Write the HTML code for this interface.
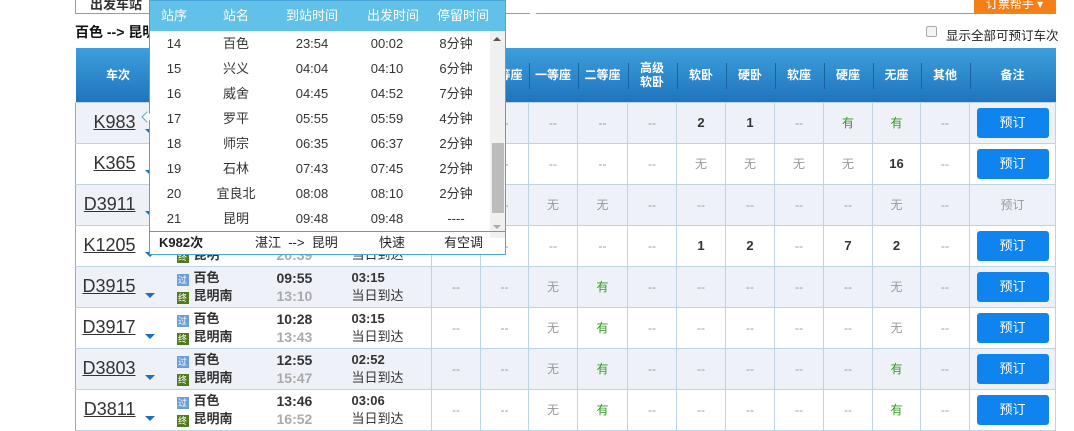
<!DOCTYPE html>
<html><head><meta charset="utf-8"><style>
*{margin:0;padding:0;box-sizing:border-box}
body{width:1074px;height:426px;overflow:hidden;background:#fff;font-family:"Liberation Sans","Noto Sans CJK SC",sans-serif;font-size:12px;color:#333;position:relative}
.abs{position:absolute}
table{border-collapse:collapse;table-layout:fixed;position:absolute;left:75px;top:48px;width:980px}
th{height:54px;color:#fff;font-weight:bold;font-size:12px;background:linear-gradient(#3d9fdc,#1f74bd);line-height:14px;position:relative}
th+th:before{content:"";position:absolute;left:0;top:15px;height:26px;border-left:1px solid #1a63a3}
th.n:before{display:none}
td{height:41px;border:1px solid #bfd4e3;text-align:center;color:#999;font-size:12px;padding:0}
td.tc,td.st,td.tm{border-right:none}
td.st,td.tm,td.du{border-left:none}
td.tc{border-left:1px solid #7fb0d8}
tr.o td{background:#eef1f8}
td.b{color:#333;font-weight:bold;font-size:13px}
td.g{color:#2e9a1e}
.btn{display:inline-block;width:72px;height:30px;line-height:30px;background:#0f84ee;color:#fff;border-radius:3px;font-size:13px}
td.tc{text-align:right;padding-right:25px;color:#333;font-size:18px;position:relative}
td.tc u{text-decoration:underline}
td.tc i{position:absolute;left:69px;top:26px;width:0;height:0;border-left:5px solid transparent;border-right:5px solid transparent;border-top:5px solid #1a6fc4}
td.st{text-align:left;padding-left:16px;color:#333;font-weight:bold;font-size:13px;line-height:18px}
.ic{display:inline-block;width:12px;height:12px;vertical-align:-1px;margin-right:5px;font-size:9px;color:#fff;line-height:12px;text-align:center;font-weight:normal}
.ig{background:#6a9ed8}.iz{background:#4f7a1d}
td.tm{text-align:left;padding-left:6px;font-weight:bold;font-size:14px;line-height:18px;color:#333}
td.tm span{color:#aaa}
td.du{text-align:left;padding-left:1px;color:#333;font-size:13px;line-height:18px}
td.du b{font-size:13px}
#pop{position:absolute;left:149px;top:0;width:357px;height:255px;border:1px solid #4aa6d8;background:#fff}
#pop .h{height:30px;background:#62c1e8;color:#fff;font-size:13px;position:relative}
#pop .h span,#pop .r span{position:absolute;top:0;width:80px;margin-left:-40px;text-align:center}
#pop .h span{line-height:30px}
#pop .r{height:25px;position:relative;font-size:13px;color:#333}
#pop .r span{line-height:25px}
</style></head><body>
<div class="abs" style="left:75px;top:-2px;width:981px;height:16px;border:1px solid #6ca7d0;border-top:none"></div>
<div class="abs" style="left:90px;top:-6px;font-weight:bold;font-size:13px">出发车站</div>
<div class="abs" style="left:974px;top:0;width:81px;height:13px;background:#f57f17;color:#fff;font-size:12px;line-height:8px;text-align:center">订票帮手 ▾</div>
<div class="abs" style="left:75px;top:22px;font-weight:bold;font-size:14px;color:#111">百色 --&gt; 昆明</div>
<div class="abs" style="left:926px;top:26px;width:11px;height:11px;border:1px solid #aaa;border-radius:2px;background:#f4f4f4"></div>
<div class="abs" style="left:946px;top:25px;font-size:12.5px;color:#222">显示全部可预订车次</div>
<table>
<colgroup><col style="width:85px"><col style="width:110px"><col style="width:80px"><col style="width:81px"><col style="width:49px"><col style="width:48px"><col style="width:49px"><col style="width:50px"><col style="width:49px"><col style="width:49px"><col style="width:49px"><col style="width:49px"><col style="width:49px"><col style="width:48px"><col style="width:49px"><col style="width:86px"></colgroup>
<tr><th>车次</th><th>出发站<br>到达站</th><th>出发时间<br>到达时间</th><th>历时</th><th>商务座</th><th>特等座</th><th>一等座</th><th>二等座</th><th>高级<br>软卧</th><th>软卧</th><th>硬卧</th><th>软座</th><th>硬座</th><th>无座</th><th>其他</th><th>备注</th></tr>
<tr class="o"><td class="tc"><u>K983</u><i></i></td><td class="st"></td><td class="tm"></td><td class="du"></td><td>--</td><td>--</td><td>--</td><td>--</td><td>--</td><td class="b">2</td><td class="b">1</td><td>--</td><td class="g">有</td><td class="g">有</td><td>--</td><td><span class="btn">预订</span></td></tr>
<tr><td class="tc"><u>K365</u><i></i></td><td class="st"></td><td class="tm"></td><td class="du"></td><td>--</td><td>--</td><td>--</td><td>--</td><td>--</td><td>无</td><td>无</td><td>无</td><td>无</td><td class="b">16</td><td>--</td><td><span class="btn">预订</span></td></tr>
<tr class="o"><td class="tc"><u>D3911</u><i></i></td><td class="st"></td><td class="tm"></td><td class="du"></td><td>--</td><td>--</td><td>无</td><td>无</td><td>--</td><td>--</td><td>--</td><td>--</td><td>--</td><td>无</td><td>--</td><td style="color:#999">预订</td></tr>
<tr><td class="tc"><u>K1205</u><i></i></td><td class="st"><br><span class="ic iz">终</span>昆明</td><td class="tm"><br><span>20:39</span></td><td class="du"><br>当日到达</td><td>--</td><td>--</td><td>--</td><td>--</td><td>--</td><td class="b">1</td><td class="b">2</td><td>--</td><td class="b">7</td><td class="b">2</td><td>--</td><td><span class="btn">预订</span></td></tr>
<tr class="o"><td class="tc"><u>D3915</u><i></i></td><td class="st"><span class="ic ig">过</span>百色<br><span class="ic iz">终</span>昆明南</td><td class="tm">09:55<br><span>13:10</span></td><td class="du"><b>03:15</b><br>当日到达</td><td>--</td><td>--</td><td>无</td><td class="g">有</td><td>--</td><td>--</td><td>--</td><td>--</td><td>--</td><td>无</td><td>--</td><td><span class="btn">预订</span></td></tr>
<tr><td class="tc"><u>D3917</u><i></i></td><td class="st"><span class="ic ig">过</span>百色<br><span class="ic iz">终</span>昆明南</td><td class="tm">10:28<br><span>13:43</span></td><td class="du"><b>03:15</b><br>当日到达</td><td>--</td><td>--</td><td>无</td><td class="g">有</td><td>--</td><td>--</td><td>--</td><td>--</td><td>--</td><td>无</td><td>--</td><td><span class="btn">预订</span></td></tr>
<tr class="o"><td class="tc"><u>D3803</u><i></i></td><td class="st"><span class="ic ig">过</span>百色<br><span class="ic iz">终</span>昆明南</td><td class="tm">12:55<br><span>15:47</span></td><td class="du"><b>02:52</b><br>当日到达</td><td>--</td><td>--</td><td>无</td><td class="g">有</td><td>--</td><td>--</td><td>--</td><td>--</td><td>--</td><td class="g">有</td><td>--</td><td><span class="btn">预订</span></td></tr>
<tr><td class="tc"><u>D3811</u><i></i></td><td class="st"><span class="ic ig">过</span>百色<br><span class="ic iz">终</span>昆明南</td><td class="tm">13:46<br><span>16:52</span></td><td class="du"><b>03:06</b><br>当日到达</td><td>--</td><td>--</td><td>无</td><td class="g">有</td><td>--</td><td>--</td><td>--</td><td>--</td><td>--</td><td class="g">有</td><td>--</td><td><span class="btn">预订</span></td></tr>
</table>
<div id="pop">
<div class="h"><span style="left:24px">站序</span><span style="left:86px">站名</span><span style="left:162px">到站时间</span><span style="left:243px">出发时间</span><span style="left:313px">停留时间</span><span style="left:383px;font-weight:bold;font-size:17px">✕</span></div>
<div style="position:absolute;left:340px;top:30px;width:15px;height:207px;background:#f0f0f0"><div style="position:absolute;left:2px;top:112px;width:12px;height:70px;background:#bcbcbc"></div><div style="position:absolute;left:3px;top:6px;border-left:4px solid transparent;border-right:4px solid transparent;border-bottom:4px solid #555"></div><div style="position:absolute;left:3px;top:194px;border-left:4px solid transparent;border-right:4px solid transparent;border-top:4px solid #aaa"></div></div>
<div class="r"><span style="left:24px">14</span><span style="left:86px">百色</span><span style="left:162px">23:54</span><span style="left:237px">00:02</span><span style="left:306px">8分钟</span></div>
<div class="r"><span style="left:24px">15</span><span style="left:86px">兴义</span><span style="left:162px">04:04</span><span style="left:237px">04:10</span><span style="left:306px">6分钟</span></div>
<div class="r"><span style="left:24px">16</span><span style="left:86px">威舍</span><span style="left:162px">04:45</span><span style="left:237px">04:52</span><span style="left:306px">7分钟</span></div>
<div class="r"><span style="left:24px">17</span><span style="left:86px">罗平</span><span style="left:162px">05:55</span><span style="left:237px">05:59</span><span style="left:306px">4分钟</span></div>
<div class="r"><span style="left:24px">18</span><span style="left:86px">师宗</span><span style="left:162px">06:35</span><span style="left:237px">06:37</span><span style="left:306px">2分钟</span></div>
<div class="r"><span style="left:24px">19</span><span style="left:86px">石林</span><span style="left:162px">07:43</span><span style="left:237px">07:45</span><span style="left:306px">2分钟</span></div>
<div class="r"><span style="left:24px">20</span><span style="left:86px">宜良北</span><span style="left:162px">08:08</span><span style="left:237px">08:10</span><span style="left:306px">2分钟</span></div>
<div class="r"><span style="left:24px">21</span><span style="left:86px">昆明</span><span style="left:162px">09:48</span><span style="left:237px">09:48</span><span style="left:306px">----</span></div>
<div style="position:absolute;left:0;top:230px;width:355px;height:24px;border-top:1px solid #4aa6d8;font-size:13px;line-height:22px;color:#222"><b style="position:absolute;left:9px">K982次</b><span style="position:absolute;left:105px">湛江 &nbsp;--&gt; &nbsp;昆明</span><span style="position:absolute;left:229px">快速</span><span style="position:absolute;left:294px">有空调</span></div>
</div>
<div class="abs" style="left:143px;top:113px;width:8px;height:8px;background:#fff;border-left:1px solid #4aa6d8;border-bottom:1px solid #4aa6d8;transform:rotate(45deg)"></div>
</body></html>
